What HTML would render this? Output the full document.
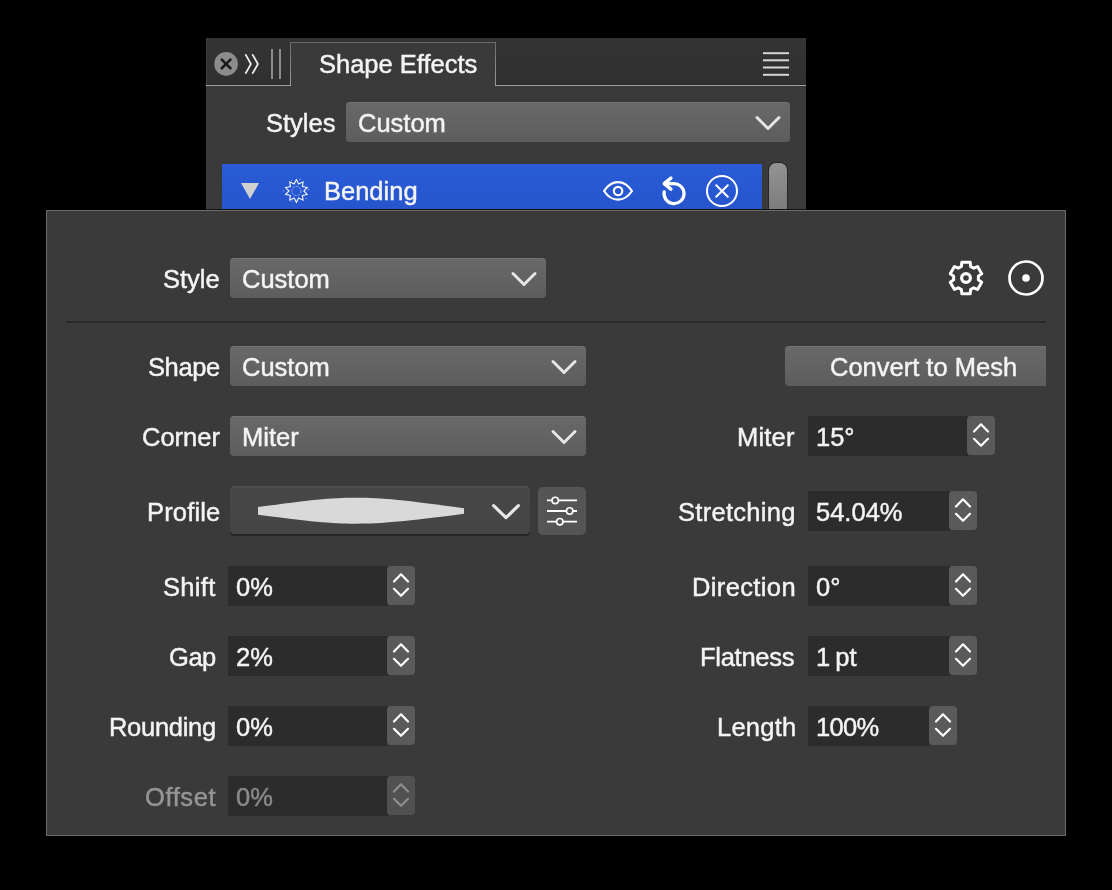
<!DOCTYPE html>
<html><head><meta charset="utf-8">
<style>
html,body{margin:0;padding:0;background:#000;width:1112px;height:890px;overflow:hidden;position:relative}
*{box-sizing:border-box}
.a{position:absolute}
.t{position:absolute;font-family:"Liberation Sans",sans-serif;font-size:25.5px;line-height:28px;color:#f4f4f4;white-space:nowrap;will-change:transform;-webkit-text-stroke-width:0.45px}
.r{text-align:right}
.dd{position:absolute;border-radius:4px;background:linear-gradient(#696969,#5d5d5d);box-shadow:inset 0 1px 0 rgba(255,255,255,0.07)}
.inp{position:absolute;background:#2c2c2c}
.stp{position:absolute;background:#5a5a5a;border-radius:4px}
.chev path{stroke:#e6e6e6;stroke-width:3;fill:none;stroke-linecap:round;stroke-linejoin:round}
svg.stp path{stroke:#fff;stroke-width:2.2;fill:none;stroke-linecap:round;stroke-linejoin:round}
.dis{color:#959595}.dis2{color:#8a8a8a}
svg.dstp{background:#515151}svg.dstp path{stroke:#8e8e8e}
</style></head><body>

<!-- top panel -->
<div class="a" style="left:206px;top:38px;width:600px;height:171px;background:#3a3a3a"></div>
<div class="a" style="left:206px;top:38px;width:1px;height:171px;background:#3f3f3f"></div>
<!-- header -->
<div class="a" style="left:207px;top:38px;width:599px;height:47px;background:linear-gradient(#343434,#303030)"></div>
<div class="a" style="left:207px;top:84px;width:599px;height:1px;background:#2a2a2a"></div>
<div class="a" style="left:206px;top:85px;width:84px;height:1px;background:#a0a0a0"></div>
<div class="a" style="left:496px;top:85px;width:310px;height:1px;background:#a0a0a0"></div>
<!-- tab -->
<div class="a" style="left:290px;top:42px;width:206px;height:44px;background:#3a3a3a"></div>
<div class="a" style="left:290px;top:42px;width:206px;height:1px;background:#6a6a6a"></div>
<div class="a" style="left:290px;top:42px;width:1px;height:44px;background:linear-gradient(#6a6a6a,#9c9c9c)"></div>
<div class="a" style="left:495px;top:42px;width:1px;height:44px;background:linear-gradient(#6a6a6a,#9c9c9c)"></div>
<!-- close btn -->
<svg class="a" style="left:206px;top:44px" width="40" height="40" viewBox="0 0 40 40">
<circle cx="20.1" cy="19.9" r="11.8" fill="#8c8c8c"/>
<path d="M15 14.8 L25.2 25 M25.2 14.8 L15 25" stroke="#1a1a1a" stroke-width="2.5" stroke-linecap="butt"/>
</svg>
<!-- chevrons -->
<svg class="a" style="left:240px;top:50px" width="26" height="28" viewBox="0 0 26 28">
<path d="M5.8 4.8 L10.9 14 L5.8 23.2 M12.7 4.8 L17.9 14 L12.7 23.2" stroke="#f4f4f4" stroke-width="1.7" fill="none" stroke-linecap="round" stroke-linejoin="miter"/>
</svg>
<div class="a" style="left:271px;top:49px;width:2px;height:30px;background:#8c8c8c"></div>
<div class="a" style="left:279px;top:49px;width:2px;height:30px;background:#8c8c8c"></div>
<div class="t" style="left:319px;top:50px">Shape Effects</div>
<!-- hamburger -->
<svg class="a" style="left:760px;top:48px" width="32" height="32" viewBox="760 48 32 32"><g fill="#d6d6d6">
<rect x="763" y="52.2" width="26" height="2"/><rect x="763" y="59.3" width="26" height="2"/><rect x="763" y="66.5" width="26" height="2"/><rect x="763" y="73.8" width="26" height="2"/></g></svg>

<div class="t r" style="right:777px;top:109px">Styles</div>
<div class="dd" style="left:346px;top:102px;width:444px;height:40px"></div>
<div class="t" style="left:358px;top:109px">Custom</div>
<svg class="a" style="left:750px;top:108.6px" width="36" height="28" viewBox="0 0 36 28">
<path d="M7 8.5 L18 19.5 L29 8.5" stroke="#e6e6e6" stroke-width="3" fill="none" stroke-linecap="round" stroke-linejoin="round"/>
</svg>

<!-- blue row -->
<div class="a" style="left:222px;top:164px;width:540px;height:45px;background:linear-gradient(#2a5cd8,#2655cc)"></div>
<svg class="a" style="left:236px;top:178px" width="28" height="26" viewBox="0 0 28 26">
<path d="M5 5 L23 5 L14 21 Z" fill="#d0d0d0"/>
</svg>
<svg class="a" style="left:280px;top:175px" width="32" height="32" viewBox="0 0 32 32">
<path d="M16.40 4.70 L18.69 8.96 L23.04 6.86 L22.39 11.65 L27.15 12.51 L23.80 16.00 L27.15 19.49 L22.39 20.35 L23.04 25.14 L18.69 23.04 L16.40 27.30 L14.11 23.04 L9.76 25.14 L10.41 20.35 L5.65 19.49 L9.00 16.00 L5.65 12.51 L10.41 11.65 L9.76 6.86 L14.11 8.96 Z" stroke="#fff" stroke-width="1.1" fill="none" stroke-linejoin="miter" opacity="0.95"/>
<circle cx="16.4" cy="16" r="4.6" stroke="#fff" stroke-width="1" fill="none" opacity="0.55" stroke-dasharray="2.2 1.2"/>
<g fill="#fff" opacity="0.6"><circle cx="11.5" cy="5.5" r="0.6"/><circle cx="20" cy="4.4" r="0.7"/><circle cx="28.5" cy="14.5" r="0.7"/><circle cx="26.3" cy="23.5" r="0.6"/><circle cx="3.3" cy="15.8" r="0.6"/><circle cx="11.8" cy="26.3" r="0.5"/></g>
</svg>
<div class="t" style="left:324px;top:177px">Bending</div>
<svg class="a" style="left:598px;top:171px" width="40" height="40" viewBox="0 0 40 40">
<path d="M6 20 C10 14.2 14.5 11.2 20 11.2 C25.5 11.2 30 14.2 34 20 C30 25.8 25.5 28.7 20 28.7 C14.5 28.7 10 25.8 6 20 Z" stroke="#fff" stroke-width="2.2" fill="none" stroke-linejoin="round"/>
<circle cx="20.1" cy="20" r="4.2" stroke="#fff" stroke-width="2.2" fill="none"/>
</svg>
<svg class="a" style="left:654px;top:170px" width="40" height="40" viewBox="0 0 40 40">
<path d="M10.2 21.8 A10 10 0 1 0 19 13.65 L11 13.6" stroke="#fff" stroke-width="3.2" fill="none" stroke-linecap="round"/>
<path d="M16.9 8.1 L10.2 13.6 L16.9 19.1" stroke="#fff" stroke-width="3.4" fill="none" stroke-linecap="round" stroke-linejoin="round"/>
</svg>
<svg class="a" style="left:702px;top:171px" width="40" height="40" viewBox="0 0 40 40">
<circle cx="20" cy="20" r="15" stroke="#fff" stroke-width="2" fill="none"/>
<path d="M14.2 14.2 L25.8 25.8 M25.8 14.2 L14.2 25.8" stroke="#fff" stroke-width="2" stroke-linecap="round"/>
</svg>
<!-- scrollbar -->
<div class="a" style="left:766px;top:162px;width:24px;height:47px;background:#3b3b3b"></div>
<div class="a" style="left:768px;top:162px;width:20px;height:47px;border-radius:8px 8px 0 0;background:#262626"></div>
<div class="a" style="left:769px;top:163px;width:18px;height:46px;border-radius:7px 7px 0 0;background:linear-gradient(#939393,#7c7c7c)"></div>
<div class="a" style="left:206px;top:209px;width:600px;height:1px;background:#111"></div>

<!-- main panel -->
<div class="a" style="left:46px;top:210px;width:1020px;height:626px;background:#3a3a3a;border:1px solid #6b6b6b"></div>


<!-- ===== main panel contents ===== -->
<div class="t r" style="right:892px;top:265px">Style</div>
<div class="dd" style="left:230px;top:258px;width:316px;height:40px"></div>
<div class="t" style="left:242px;top:265px">Custom</div>
<svg class="a chev" style="left:506px;top:264.7px" width="36" height="28" viewBox="0 0 36 28"><path d="M7 8.5 L18 19.5 L29 8.5"/></svg>

<svg class="a" style="left:946px;top:258px" width="40" height="40" viewBox="0 0 40 40">
<path d="M15.42 8.37 L15.81 4.25 L24.19 4.25 L24.58 8.37 L27.78 10.22 L31.55 8.49 L35.74 15.75 L32.36 18.15 L32.36 21.85 L35.74 24.25 L31.55 31.51 L27.78 29.78 L24.58 31.63 L24.19 35.75 L15.81 35.75 L15.42 31.63 L12.22 29.78 L8.45 31.51 L4.26 24.25 L7.64 21.85 L7.64 18.15 L4.26 15.75 L8.45 8.49 L12.22 10.22 Z" stroke="#fff" stroke-width="3" fill="none" stroke-linejoin="round"/>
<circle cx="20" cy="20" r="4.4" stroke="#fff" stroke-width="3.2" fill="none"/>
</svg>
<svg class="a" style="left:1006px;top:258px" width="40" height="40" viewBox="0 0 40 40">
<circle cx="20" cy="20" r="16.5" stroke="#fff" stroke-width="2.7" fill="none"/>
<circle cx="20" cy="20" r="3.8" fill="#fff"/>
</svg>

<div class="a" style="left:66px;top:321px;width:980px;height:2px;background:#2b2b2b"></div>

<div class="t r" style="right:892px;top:353px;letter-spacing:-0.4px">Shape</div>
<div class="dd" style="left:230px;top:346px;width:356px;height:40px"></div>
<div class="t" style="left:242px;top:353px">Custom</div>
<svg class="a chev" style="left:546px;top:352.7px" width="36" height="28" viewBox="0 0 36 28"><path d="M7 8.5 L18 19.5 L29 8.5"/></svg>

<div class="dd" style="left:785px;top:346px;width:261px;height:40px;border-radius:4px 0 0 4px"></div>
<div class="t" style="left:830px;top:353px">Convert to Mesh</div>

<div class="t r" style="right:892px;top:423px">Corner</div>
<div class="dd" style="left:230px;top:416px;width:356px;height:40px"></div>
<div class="t" style="left:242px;top:423px">Miter</div>
<svg class="a chev" style="left:546px;top:422.7px" width="36" height="28" viewBox="0 0 36 28"><path d="M7 8.5 L18 19.5 L29 8.5"/></svg>

<div class="t r" style="right:317px;top:423px;letter-spacing:0.2px">Miter</div>
<div class="inp" style="left:808px;top:416px;width:160px;height:40px"></div>
<div class="t" style="left:816px;top:423px">15°</div>
<svg class="a stp" style="left:967px;top:416px" width="28" height="39" viewBox="0 0 28 39"><path d="M7 15.5 L14 8.3 L21 15.5 M7 22.8 L14 29.8 L21 22.8"/></svg>

<div class="t r" style="right:892px;top:498px;letter-spacing:0.17px">Profile</div>
<div class="a" style="left:230px;top:486px;width:300px;height:50px;border-radius:4px;background:#262626"></div>
<div class="a" style="left:230px;top:486px;width:300px;height:48px;border-radius:4px;background:linear-gradient(#505050,#474747 6%,#454545)"></div>
<svg class="a" style="left:230px;top:486px" width="300" height="48" viewBox="230 486 300 48">
<path d="M258 507 C310 500 330 497.7 356 497.7 C382 497.7 405 500 464 508.2 L464 513.8 C405 521.5 382 523.7 356 523.7 C330 523.7 310 521.5 258 514.8 Z" fill="#d9d9d9"/>
</svg>
<svg class="a chev" style="left:488px;top:498px" width="36" height="28" viewBox="0 0 36 28"><path d="M5.6 7.6 L18 19.6 L30.4 7.6" style="stroke-width:3.2"/></svg>
<div class="a" style="left:538px;top:487px;width:48px;height:48px;border-radius:5px;background:#555"></div>
<svg class="a" style="left:538px;top:487px" width="48" height="48" viewBox="538 487 48 48">
<g stroke="#fff" stroke-width="1.8" fill="none">
<path d="M547 500.4 H552 M558.4 500.4 H577 M547 511 H566.5 M572.9 511 H577 M547 521.7 H556.6 M563 521.7 H577"/>
<circle cx="555.2" cy="500.4" r="3.2" stroke-width="1.6"/><circle cx="569.7" cy="511" r="3.2" stroke-width="1.6"/><circle cx="559.8" cy="521.7" r="3.2" stroke-width="1.6"/>
</g></svg>

<div class="t r" style="right:316px;top:498px;letter-spacing:0.28px">Stretching</div>
<div class="inp" style="left:808px;top:491px;width:142px;height:40px"></div>
<div class="t" style="left:816px;top:498px">54.04%</div>
<svg class="a stp" style="left:949px;top:491px" width="28" height="39" viewBox="0 0 28 39"><path d="M7 15.5 L14 8.3 L21 15.5 M7 22.8 L14 29.8 L21 22.8"/></svg>

<div class="t r" style="right:896px;top:573px;letter-spacing:0.3px">Shift</div>
<div class="inp" style="left:228px;top:566px;width:160px;height:40px"></div>
<div class="t" style="left:236px;top:573px">0%</div>
<svg class="a stp" style="left:387px;top:566px" width="28" height="39" viewBox="0 0 28 39"><path d="M7 15.5 L14 8.3 L21 15.5 M7 22.8 L14 29.8 L21 22.8"/></svg>

<div class="t r" style="right:316px;top:573px;letter-spacing:0.37px">Direction</div>
<div class="inp" style="left:808px;top:566px;width:142px;height:40px"></div>
<div class="t" style="left:816px;top:573px">0°</div>
<svg class="a stp" style="left:949px;top:566px" width="28" height="39" viewBox="0 0 28 39"><path d="M7 15.5 L14 8.3 L21 15.5 M7 22.8 L14 29.8 L21 22.8"/></svg>

<div class="t r" style="right:896px;top:643px;letter-spacing:-0.45px">Gap</div>
<div class="inp" style="left:228px;top:636px;width:160px;height:40px"></div>
<div class="t" style="left:236px;top:643px">2%</div>
<svg class="a stp" style="left:387px;top:636px" width="28" height="39" viewBox="0 0 28 39"><path d="M7 15.5 L14 8.3 L21 15.5 M7 22.8 L14 29.8 L21 22.8"/></svg>

<div class="t r" style="right:317.5px;top:643px;letter-spacing:-0.27px">Flatness</div>
<div class="inp" style="left:808px;top:636px;width:142px;height:40px"></div>
<div class="t" style="left:816px;top:643px;word-spacing:-2px">1 pt</div>
<svg class="a stp" style="left:949px;top:636px" width="28" height="39" viewBox="0 0 28 39"><path d="M7 15.5 L14 8.3 L21 15.5 M7 22.8 L14 29.8 L21 22.8"/></svg>

<div class="t r" style="right:896px;top:713px;letter-spacing:-0.3px">Rounding</div>
<div class="inp" style="left:228px;top:706px;width:160px;height:40px"></div>
<div class="t" style="left:236px;top:713px">0%</div>
<svg class="a stp" style="left:387px;top:706px" width="28" height="39" viewBox="0 0 28 39"><path d="M7 15.5 L14 8.3 L21 15.5 M7 22.8 L14 29.8 L21 22.8"/></svg>

<div class="t r" style="right:316px;top:713px;letter-spacing:0.24px">Length</div>
<div class="inp" style="left:808px;top:706px;width:122px;height:40px"></div>
<div class="t" style="left:816px;top:713px;letter-spacing:-0.7px">100%</div>
<svg class="a stp" style="left:929px;top:706px" width="28" height="39" viewBox="0 0 28 39"><path d="M7 15.5 L14 8.3 L21 15.5 M7 22.8 L14 29.8 L21 22.8"/></svg>

<div class="t r dis" style="right:896px;top:783px;letter-spacing:0.6px">Offset</div>
<div class="inp" style="left:228px;top:776px;width:160px;height:40px"></div>
<div class="t dis2" style="left:236px;top:783px">0%</div>
<svg class="a stp dstp" style="left:387px;top:776px" width="28" height="39" viewBox="0 0 28 39"><path d="M7 15.5 L14 8.3 L21 15.5 M7 22.8 L14 29.8 L21 22.8"/></svg>

</body></html>
